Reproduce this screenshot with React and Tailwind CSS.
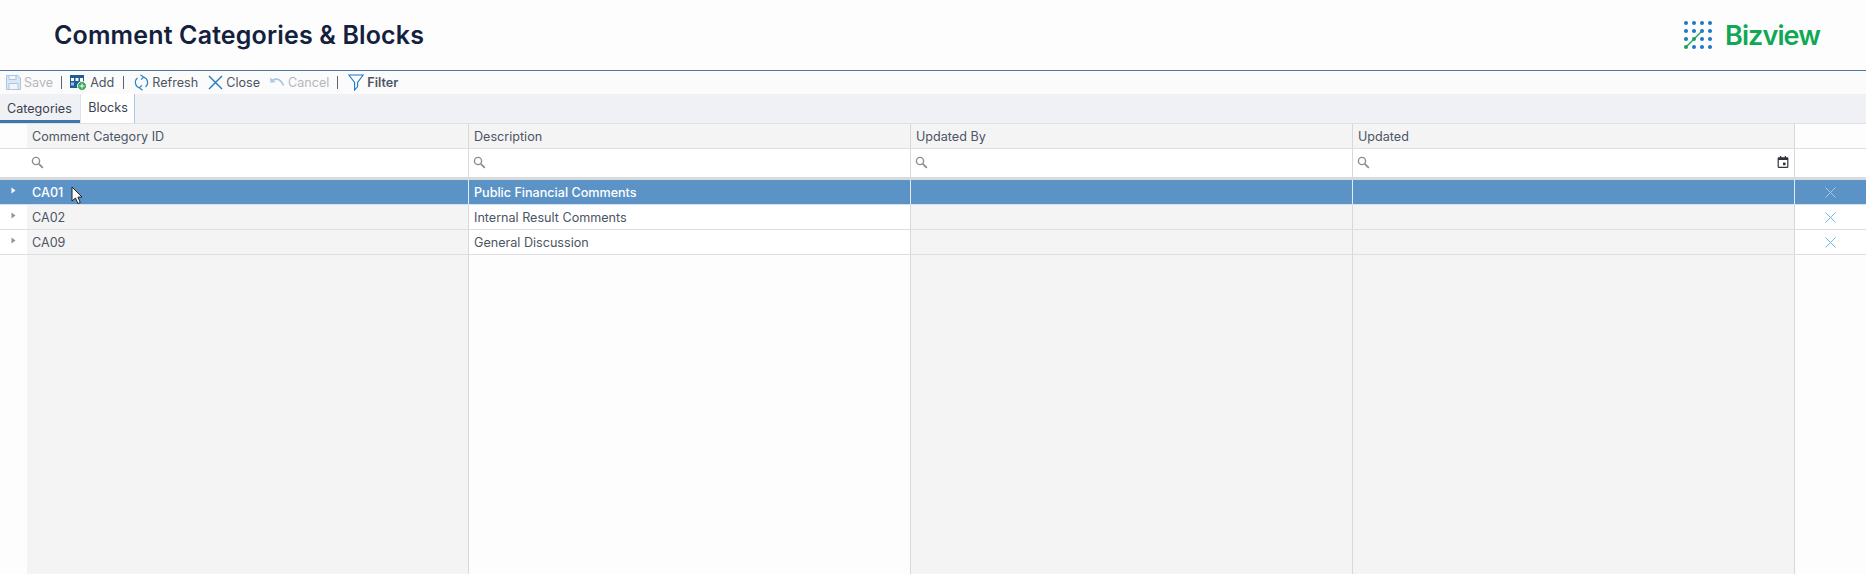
const GRID = "grid grid-cols-[27px_442px_442px_442px_442px_71px]";

const rows = [
  { id: "CA01", description: "Public Financial Comments", selected: true },
  { id: "CA02", description: "Internal Result Comments" },
  { id: "CA09", description: "General Discussion" },
];

const columns = ["Comment Category ID", "Description", "Updated By", "Updated"];

function SearchIcon() {
  return (
    <svg width="13" height="13" viewBox="0 0 13 13" fill="none" stroke="#8a8d93" strokeWidth="1.4">
      <circle cx="5" cy="5" r="3.6" />
      <path d="M7.8 7.8 11.8 11.8" strokeWidth="1.8" />
    </svg>
  );
}

function CalendarIcon() {
  return (
    <svg width="12" height="12" viewBox="0 0 12 12" fill="#2f343c">
      <path d="M3 0h1.2v1.2h3.6V0H9v1.2h1.2c.7 0 1.2.5 1.2 1.2v8.4c0 .7-.5 1.2-1.2 1.2H1.8c-.7 0-1.2-.5-1.2-1.2V2.4c0-.7.5-1.2 1.2-1.2H3V0Zm-1.2 4v6.8h8.4V4H1.8Z" />
      <rect x="6" y="6.6" width="2.6" height="2.6" />
    </svg>
  );
}

function RowArrow({ selected }) {
  return (
    <svg width="5" height="7" viewBox="0 0 5 7" fill={selected ? "#ffffff" : "#8f9399"}>
      <path d="M0.5 0.5 4.5 3.5 0.5 6.5Z" />
    </svg>
  );
}

function ToolbarButton({ icon, label, disabled, bold }) {
  return (
    <div
      className={`flex items-center gap-[3px] ${disabled ? "text-[#b4b8bd]" : "text-[#4b5563]"} ${bold ? "font-semibold" : ""}`}
    >
      {icon}
      <span className="pt-[1px]">{label}</span>
    </div>
  );
}

function Divider() {
  return <div className="mx-[8px] h-[13px] w-px bg-[#5b6470]" />;
}

function Toolbar() {
  return (
    <div className="flex h-[23px] items-center bg-[#fbfbfb] pl-[6px] text-[12.6px]">
      <ToolbarButton
        disabled
        label="Save"
        icon={
          <svg width="15" height="15" viewBox="0 0 15 15" fill="#dbe8f3" stroke="#a9c6de">
            <path d="M.5.5h11.5l2.5 2.5v11.5H.5Z" />
            <path d="M3 .5h7v4H3ZM3 8.5h9v6H3Z" fill="#f3f7fa" />
          </svg>
        }
      />
      <Divider />
      <ToolbarButton
        label="Add"
        icon={
          <svg width="17" height="17" viewBox="0 0 17 17">
            <rect x="0" y="1" width="14" height="13" fill="#1f5f96" />
            <rect x="1" y="4" width="3" height="3" fill="#fff" />
            <rect x="5.5" y="4" width="3" height="3" fill="#fff" />
            <rect x="10" y="4" width="3" height="3" fill="#fff" />
            <rect x="1" y="8.5" width="3" height="3" fill="#9cc3e2" />
            <circle cx="12" cy="12" r="4.5" fill="#3aa657" stroke="#fff" />
            <path d="M12 9.5v5M9.5 12h5" stroke="#fff" />
          </svg>
        }
      />
      <div className="ml-[1px]">
        <Divider />
      </div>
      <div className="ml-[2px]">
        <ToolbarButton
          label="Refresh"
          icon={
            <svg width="15" height="17" viewBox="0 0 15 17" fill="none" stroke="#2b87cf" strokeWidth="1.2">
              <path d="M9.5 3.2A5.6 5.6 0 0 1 11.5 13" />
              <path d="M5.5 13.8A5.6 5.6 0 0 1 3.5 4" />
              <path d="M6.5 .8 9.6 3.2 7 5.6M8.5 16.2 5.4 13.8 8 11.4" />
            </svg>
          }
        />
      </div>
      <div className="ml-[10px]">
        <ToolbarButton
          label="Close"
          icon={
            <svg width="15" height="15" viewBox="0 0 15 15" stroke="#1b78c4" strokeWidth="1.4">
              <path d="M1 1 14 14M14 1 1 14" />
            </svg>
          }
        />
      </div>
      <div className="ml-[9px]">
        <ToolbarButton
          disabled
          label="Cancel"
          icon={
            <svg width="16" height="12" viewBox="0 0 16 12" fill="none" stroke="#a7c8e4" strokeWidth="1.7">
              <path d="M2 5.5C5 2 11 1.5 14.5 9.5" />
              <path d="M.8 1.5 1.6 6.8 6.8 6" fill="#a7c8e4" stroke="none" />
            </svg>
          }
        />
      </div>
      <Divider />
      <div className="ml-[2px]">
        <ToolbarButton
          bold
          label="Filter"
          icon={
            <svg width="16" height="17" viewBox="0 0 16 17" fill="none" stroke="#1b78c4" strokeWidth="1.1">
              <path d="M.8 1h14.4L9.6 8.5v4L6.6 16V8.5Z" />
            </svg>
          }
        />
      </div>
    </div>
  );
}

function Tabs() {
  return (
    <div className="flex h-[30px] border-b border-[#dfe1e4] bg-[#eff1f4] text-[12.6px]">
      <div className="flex w-[80px] items-center border-b-[3px] border-[#3f77ad] pl-[7px] pt-[5px] text-[#3a4250]">Categories</div>
      <div className="flex w-[55px] items-center justify-center border-x border-r-[#a9c8e4] border-l-[#dfe1e4] bg-white pl-[1px] text-[#3a4250]">
        Blocks
      </div>
    </div>
  );
}

function GridHeader() {
  return (
    <div className={`${GRID} h-[25px] border-b border-[#dcdee1] text-[12.6px] text-[#4b5563]`}>
      <div />
      {columns.map((name) => (
        <div key={name} className="flex items-center border-r border-[#d5d8dd] bg-[#f4f4f5] pl-[5px] pt-[2px]">
          {name}
        </div>
      ))}
      <div />
    </div>
  );
}

function FilterRow() {
  return (
    <div className={`${GRID} h-[31px] border-b-[3px] border-[#d9dadc] bg-white`}>
      <div />
      {columns.map((name) => (
        <div key={name} className="flex items-center justify-between border-r border-[#d5d8dd] pb-[2px] pl-[4px] pr-[5px]">
          <SearchIcon />
          {name === "Updated" && <CalendarIcon />}
        </div>
      ))}
      <div />
    </div>
  );
}

function DataRow({ row }) {
  const selected = row.selected;
  const cell = `border-r ${selected ? "border-[#e3ebf3]" : "border-[#d5d8dd]"}`;
  const bg = selected ? "" : "bg-[#f4f4f5]";
  return (
    <div
      className={`${GRID} h-[25px] border-b text-[12.6px] ${
        selected ? "border-[#d5e3f0] bg-[#5c93c7] text-white" : "border-[#dcdee1] bg-white text-[#4b5563]"
      }`}
    >
      <div className="flex items-center justify-center pb-[4px]">
        <RowArrow selected={selected} />
      </div>
      <div className={`relative flex items-center pl-[5px] pt-[2px] ${cell} ${bg} ${selected ? "font-medium" : ""}`}>
        {row.id}
        {selected && (
          <svg className="absolute left-[44px] top-[6px]" width="12" height="19" viewBox="0 0 12 19">
            <path d="M1 1v14l3.5-3 2.4 5.5 2.4-1-2.4-5.4H11Z" fill="#fff" stroke="#1d2026" />
          </svg>
        )}
      </div>
      <div className={`flex items-center pl-[5px] pt-[2px] ${cell} ${selected ? "font-medium" : ""}`}>{row.description}</div>
      <div className={`${cell} ${bg}`} />
      <div className={`${cell} ${bg}`} />
      <div className="flex items-center justify-center">
        <svg width="11" height="11" viewBox="0 0 11 11" stroke={selected ? "#a9cbe8" : "#74b6e4"}>
          <path d="M.5.5 10.5 10.5M10.5.5.5 10.5" />
        </svg>
      </div>
    </div>
  );
}

export default function App() {
  return (
    <div className="flex h-[574px] flex-col overflow-hidden bg-[#fdfdfd] font-['Inter',sans-serif]">
      <header className="flex h-[71px] shrink-0 items-center justify-between border-b border-[#4f75a3] pl-[54px] pr-[46px] pt-[1px]">
        <h1 className="text-[25px] font-semibold tracking-[0.15px] text-[#14213d]">Comment Categories & Blocks</h1>
        <div className="flex items-center gap-[12px]">
          <svg width="29" height="29" viewBox="0 0 29 29">
            {[2, 10, 18, 26].map((y) =>
              [2, 10, 18, 26].map((x) => {
                const green = x + y === 28 && x < 18;
                return <circle key={`${x}-${y}`} cx={x} cy={y} r="2" fill={green ? "#17a659" : "#1b78c4"} />;
              }),
            )}
            <path d="M2 26 18 10" stroke="#17a659" strokeWidth="1.2" />
          </svg>
          <span className="text-[27px] font-semibold leading-none tracking-[-0.9px] text-[#10a854]">Bizview</span>
        </div>
      </header>
      <Toolbar />
      <Tabs />
      <GridHeader />
      <FilterRow />
      {rows.map((row) => (
        <DataRow key={row.id} row={row} />
      ))}
      <div className={`${GRID} flex-1`}>
        <div />
        <div className="border-r border-[#d5d8dd] bg-[#f4f4f5]" />
        <div className="border-r border-[#d5d8dd]" />
        <div className="border-r border-[#d5d8dd] bg-[#f4f4f5]" />
        <div className="border-r border-[#d5d8dd] bg-[#f4f4f5]" />
        <div />
      </div>
    </div>
  );
}
